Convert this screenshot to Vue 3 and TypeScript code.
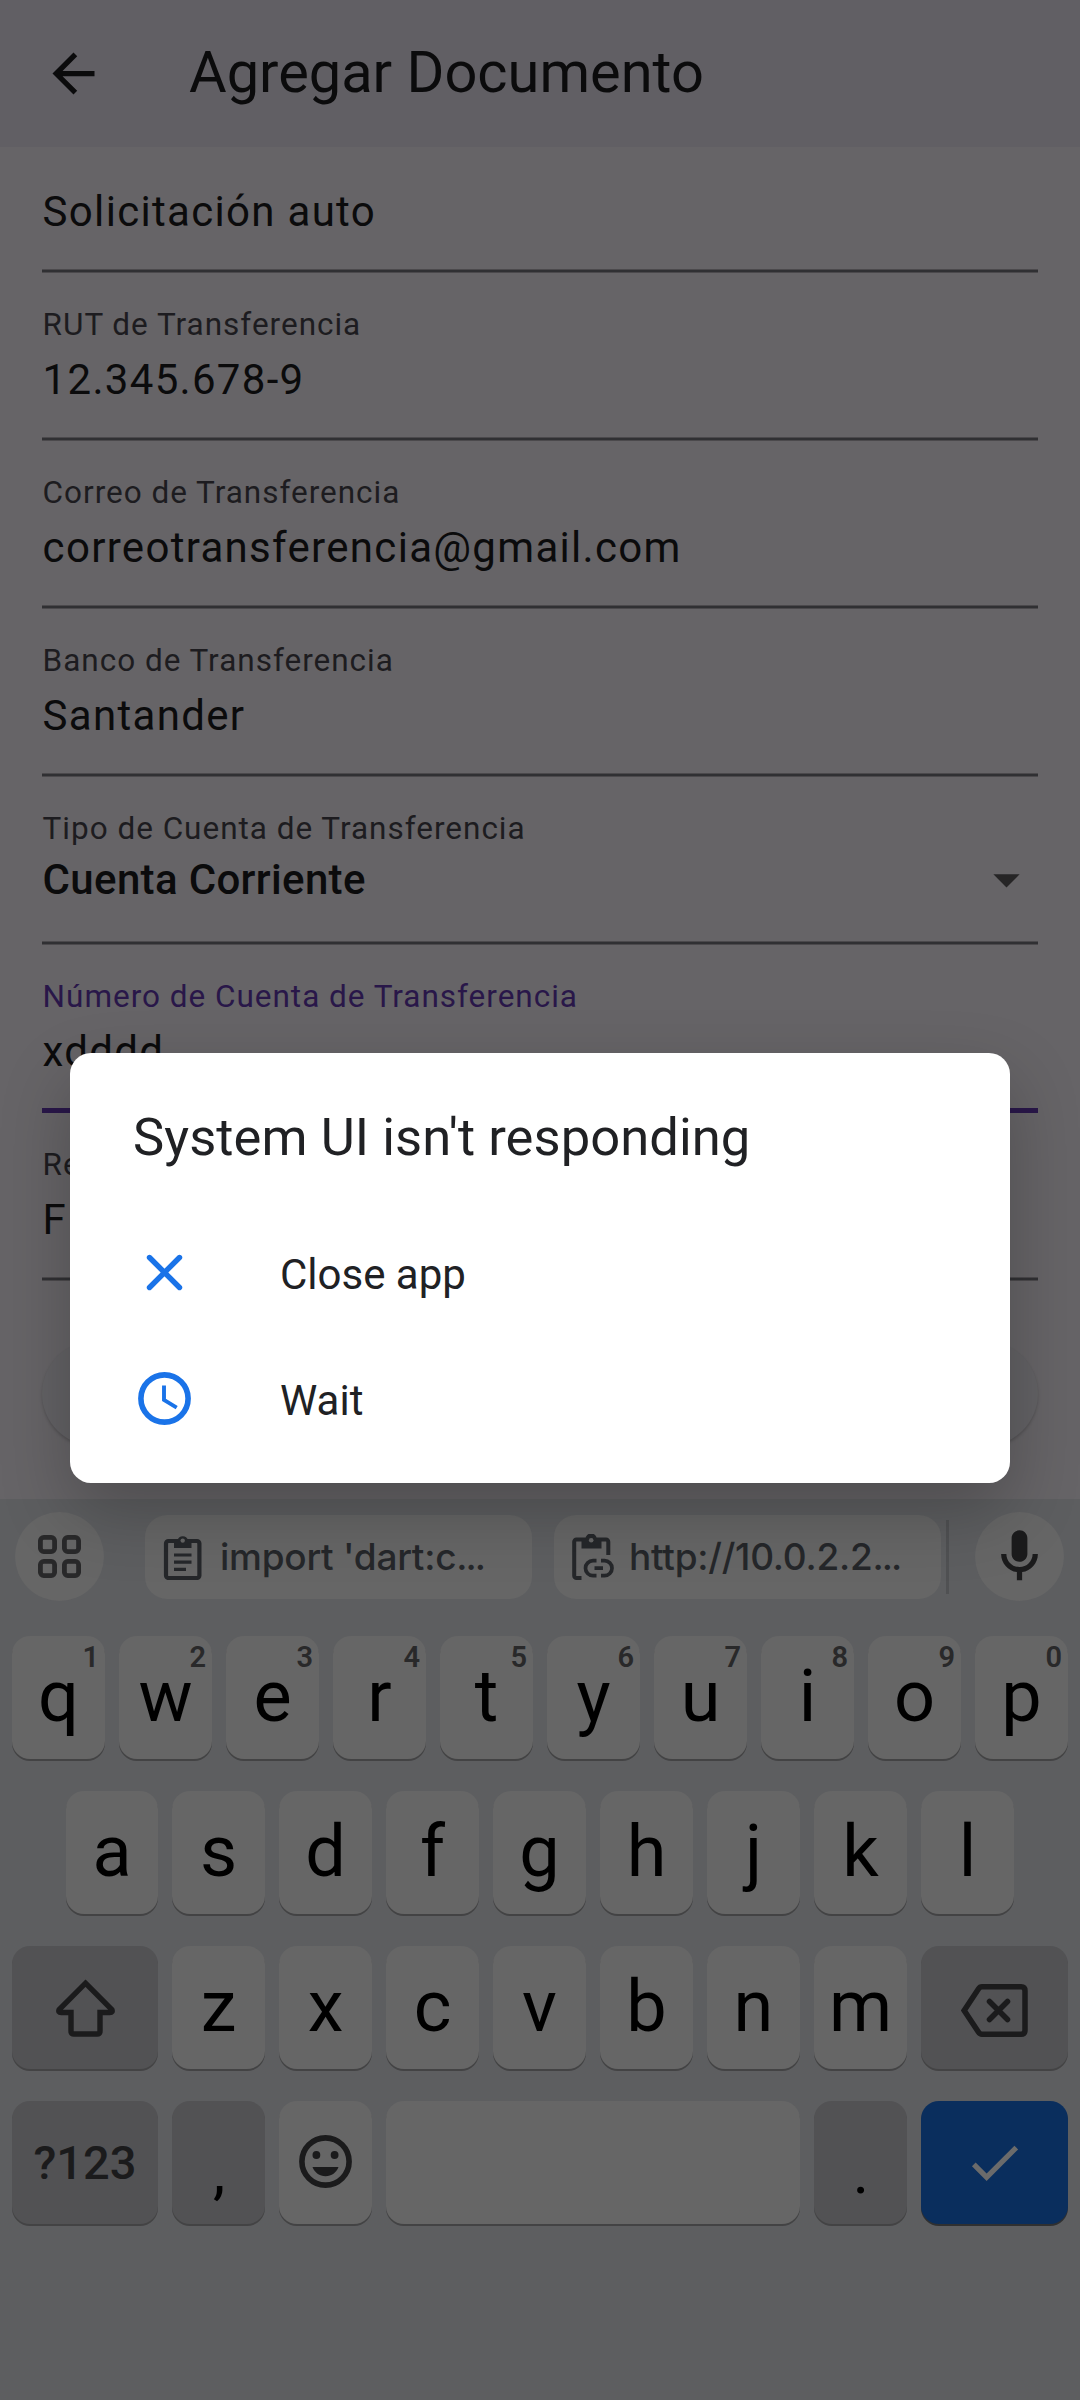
<script setup lang="ts">
interface Field {
  label?: string
  value: string
  kind?: 'select' | 'focused'
}

const fields: Field[] = [
  { value: 'Solicitación auto' },
  { label: 'RUT de Transferencia', value: '12.345.678-9' },
  { label: 'Correo de Transferencia', value: 'correotransferencia@gmail.com' },
  { label: 'Banco de Transferencia', value: 'Santander' },
  { label: 'Tipo de Cuenta de Transferencia', value: 'Cuenta Corriente', kind: 'select' },
  { label: 'Número de Cuenta de Transferencia', value: 'xdddd', kind: 'focused' },
  { label: 'Re', value: 'F' },
]

const topRow = 'qwertyuiop'.split('').map((letter, i) => ({ letter, hint: String((i + 1) % 10) }))
const middleRow = 'asdfghjkl'.split('')
const bottomRow = 'zxcvbnm'.split('')
</script>

<template>
  <div class="screen">
    <header class="app-bar">
      <svg class="icon" viewBox="0 0 24 24"><path d="M20 11H7.83l5.59-5.59L12 4l-8 8 8 8 1.41-1.41L7.83 13H20z" /></svg>
      <h1>Agregar Documento</h1>
    </header>

    <main class="form">
      <div
        v-for="field in fields"
        :key="field.value"
        class="field"
        :class="[field.kind, { first: !field.label }]"
      >
        <div v-if="field.label" class="label">{{ field.label }}</div>
        <div class="value">
          <span>{{ field.value }}</span>
          <svg v-if="field.kind === 'select'" class="icon drop" viewBox="0 0 24 24"><path d="M7 10l5 5 5-5z" /></svg>
        </div>
        <div class="underline"></div>
      </div>
      <div class="submit"></div>
    </main>

    <section class="keyboard">
      <div class="strip">
        <div class="round">
          <svg class="grid-icon" viewBox="0 0 43 43">
            <rect x="2.4" y="2.4" width="14.2" height="14.2" rx="3.4" />
            <rect x="26.4" y="2.4" width="14.2" height="14.2" rx="3.4" />
            <rect x="2.4" y="26.4" width="14.2" height="14.2" rx="3.4" />
            <rect x="26.4" y="26.4" width="14.2" height="14.2" rx="3.4" />
          </svg>
        </div>
        <div class="chip">
          <svg class="clip" viewBox="0 0 44 46">
            <rect x="3" y="7" width="33.4" height="37" rx="2.5" fill="none" stroke-width="4.2" />
            <path class="solid" d="M11 6h3.500a5.500 5.500 0 0 1 10.500 0H28.500v8H11z" />
            <circle class="hole" cx="19.700" cy="6.600" r="2.200" />
            <path d="M11 21h17.500M11 28.200h17.500M11 35.400h12" fill="none" stroke-width="3.200" />
          </svg>
          <span class="clip-text">import 'dart:c<span class="dots">...</span></span>
        </div>
        <div class="chip second">
          <svg class="clip" viewBox="0 0 44 46">
            <path d="M9.500 44H4.500a2.300 2.300 0 0 1-2.300-2.300V7.800a2.300 2.300 0 0 1 2.300-2.300H34a2.300 2.300 0 0 1 2.300 2.300V21" fill="none" stroke-width="4" />
            <path class="solid" d="M9.500 5h4a5.600 5.600 0 0 1 11.200 0h4.800v9.500h-20z" />
            <circle class="hole" cx="19.200" cy="6.300" r="2.300" />
            <path d="M24.500 26.700h-3.500a7.500 7.500 0 0 0 0 15h3.500M29 26.700h3.500a7.500 7.500 0 0 1 0 15H29M22.500 34.200h8.500" fill="none" stroke-width="3.700" />
          </svg>
          <span class="clip-text">http://10.0.2.2<span class="dots">...</span></span>
        </div>
        <div class="separator"></div>
        <div class="round mic">
          <svg class="icon" viewBox="0 0 24 24"><path d="M12 14c1.660 0 3-1.340 3-3V5c0-1.660-1.340-3-3-3S9 3.340 9 5v6c0 1.660 1.340 3 3 3zM17 11c0 2.760-2.240 5-5 5s-5-2.240-5-5H5c0 3.530 2.610 6.430 6 6.920V21h2v-3.080c3.390-.490 6-3.390 6-6.920z" /></svg>
        </div>
      </div>

      <div class="keys">
        <div class="row">
          <div v-for="key in topRow" :key="key.letter" class="key">
            {{ key.letter }}<span class="hint">{{ key.hint }}</span>
          </div>
        </div>
        <div class="row middle">
          <div v-for="letter in middleRow" :key="letter" class="key">{{ letter }}</div>
        </div>
        <div class="row">
          <div class="key dark wide">
            <svg class="shift" viewBox="0 0 59 58"><path d="M29.500 4.200 55.800 30.500q1.400 3-2 3H44V52q0 3-3 3H18q-3 0-3-3V33.500H5.200q-3.400 0-2-3z" /></svg>
          </div>
          <div v-for="letter in bottomRow" :key="letter" class="key">{{ letter }}</div>
          <div class="key dark wide end">
            <svg class="erase" viewBox="0 0 67 53">
              <path d="M21 2.800H60q4 0 4 4V46.200q0 4-4 4H21q-2.200 0-3.600-2.200L3.200 26.500 17.400 5Q18.800 2.800 21 2.800z" />
              <path d="M28.500 17.500l18 18M46.500 17.500l-18 18" />
            </svg>
          </div>
        </div>
        <div class="row">
          <div class="key dark wide symbols">?123</div>
          <div class="key dark punct">,</div>
          <div class="key">
            <svg class="smile" viewBox="0 0 53 53">
              <circle cx="26.500" cy="26.500" r="23.600" fill="none" stroke-width="5.600" />
              <circle class="solid" cx="17.400" cy="20" r="3.900" />
              <circle class="solid" cx="35.600" cy="20" r="3.900" />
              <path class="solid" d="M13.500 32h26c-2 5.500-7 9.200-13 9.200s-11-3.700-13-9.200z" />
            </svg>
          </div>
          <div class="key space"></div>
          <div class="key dark punct">.</div>
          <div class="key wide end accept">
            <svg class="icon" viewBox="0 0 24 24"><path d="M9 16.170 4.830 12l-1.420 1.410L9 19 21 7l-1.410-1.410z" /></svg>
          </div>
        </div>
      </div>
    </section>

    <div class="dialog">
      <h2>System UI isn't responding</h2>
      <div class="option">
        <svg class="icon" viewBox="0 0 63 63"><path d="M16.500 16.500l30 30M46.500 16.500l-30 30" stroke-width="5.400" stroke-linecap="round" /></svg>
        <span>Close app</span>
      </div>
      <div class="option">
        <svg class="icon" viewBox="0 0 63 63">
          <circle cx="31.500" cy="31.500" r="23.600" stroke-width="5.600" />
          <path d="M31 18.500V33l12.700 7.600" stroke-width="3.900" />
        </svg>
        <span>Wait</span>
      </div>
    </div>
  </div>
</template>

<style scoped>
.screen {
  position: relative;
  display: flex;
  flex-direction: column;
  width: 1080px;
  height: 2400px;
  overflow: hidden;
  background: #666467;
  color: #0b0b0c;
  font-family: Roboto, "Liberation Sans", sans-serif;
}
.screen * {
  box-sizing: border-box;
}
svg {
  display: block;
  flex: none;
}
.icon {
  width: 63px;
  height: 63px;
}
.app-bar {
  display: flex;
  flex: none;
  align-items: center;
  gap: 84px;
  height: 147px;
  padding-left: 42px;
  background: #615f64;
}
.app-bar .icon {
  fill: #0b0b0c;
}
h1 {
  margin: 0;
  padding-bottom: 4px;
  font-size: 57.750px;
  font-weight: 400;
  line-height: 68px;
}
.form {
  flex: none;
  height: 1352px;
  padding: 0 42px;
}
.field {
  display: flex;
  flex-direction: column;
  height: 168px;
  padding-top: 32.600px;
}
.field.first {
  height: 125.600px;
  padding-top: 39.700px;
}
.label {
  height: 40px;
  margin-bottom: 9.500px;
  padding-left: 0.600px;
  color: #1d1c20;
  font-size: 31.500px;
  line-height: 40px;
  letter-spacing: 0.980px;
  white-space: nowrap;
}
.value {
  display: flex;
  justify-content: space-between;
  height: 50px;
  font-size: 42px;
  line-height: 50px;
  letter-spacing: 1.310px;
}
.value span {
  padding-left: 0.600px;
}
.select .label {
  margin-bottom: 5.500px;
}
.select .value {
  align-items: center;
  font-weight: 500;
  letter-spacing: 0.340px;
}
.drop {
  fill: #262526;
}
.underline {
  height: 4px;
  margin-top: auto;
  background: linear-gradient(#4b494c 1px, #303033 1px 3px, #4b494c 3px);
}
.focused .label {
  color: #291749;
}
.focused .underline {
  height: 5px;
  background: #291749;
}
.submit {
  height: 105px;
  margin-top: 60.900px;
  border-radius: 53px;
  background: #636265;
  box-shadow: 0 2px 3px rgba(0, 0, 0, 0.180);
}
.keyboard {
  flex: 1;
  padding-top: 13px;
  background: #5d5e60;
}
.strip {
  display: flex;
  align-items: center;
  height: 89px;
  padding-left: 15px;
}
.round {
  display: flex;
  align-items: center;
  justify-content: center;
  width: 89px;
  height: 89px;
  border-radius: 50%;
  background: #666;
}
.grid-icon {
  width: 43px;
  height: 43px;
  fill: none;
  stroke: #29292a;
  stroke-width: 4.800px;
}
.chip {
  display: flex;
  align-items: center;
  width: 387px;
  height: 84px;
  margin-left: 41px;
  padding-left: 18px;
  border-radius: 22px;
  background: #666;
  color: #25272a;
  font-family: Inter, Roboto, sans-serif;
  font-size: 37px;
  font-weight: 500;
  letter-spacing: -0.250px;
  white-space: nowrap;
}
.chip.second {
  margin-left: 22px;
}
.clip-text {
  margin-left: 13px;
}
.dots {
  letter-spacing: -2px;
}
.clip {
  width: 44px;
  height: 46px;
  stroke: #25272a;
}
.clip .solid {
  fill: #25272a;
  stroke: none;
}
.clip .hole {
  fill: #666;
  stroke: none;
}
.separator {
  width: 3px;
  height: 74px;
  margin: 0 26px 0 5px;
  background: #505153;
}
.mic .icon {
  fill: #1b1b1c;
}
.keys {
  display: flex;
  flex-direction: column;
  gap: 32px;
  padding: 35px 12px 0;
}
.row {
  display: flex;
  gap: 14px;
}
.row.middle {
  padding: 0 54px;
}
.key {
  position: relative;
  display: flex;
  flex: none;
  align-items: center;
  justify-content: center;
  width: 93px;
  height: 123px;
  padding-bottom: 2px;
  border-radius: 18px;
  background: #666;
  box-shadow: 0 2px 0 #434344;
  color: #000;
  font-size: 72px;
  line-height: 120px;
}
.row.middle .key:first-child {
  width: 92px;
}
.hint {
  position: absolute;
  top: 8px;
  right: 6px;
  color: #29292a;
  font-size: 29px;
  font-weight: 600;
  line-height: 26px;
}
.key.dark {
  background: #525254;
}
.key.wide {
  width: 146px;
  padding-bottom: 0;
}
.key.wide.end {
  width: 147px;
}
.key.space {
  flex: 1;
}
.symbols {
  color: #1b1b1c;
  font-size: 47px;
  font-weight: 500;
}
.key.punct {
  padding: 19px 0 0 1px;
  font-size: 62px;
}
.shift {
  width: 59px;
  height: 58px;
  fill: none;
  stroke: #1b1b1c;
  stroke-width: 5.400px;
}
.erase {
  width: 67px;
  height: 53px;
  margin-top: 5px;
  fill: none;
  stroke: #1b1b1c;
  stroke-width: 5.500px;
  stroke-linecap: round;
}
.smile {
  width: 53px;
  height: 53px;
  stroke: #1b1b1c;
}
.smile .solid {
  fill: #1b1b1c;
  stroke: none;
}
.key.accept {
  background: #0a2e5d;
  box-shadow: 0 2px 0 #2f3031;
}
.accept .icon {
  fill: #6b6b6b;
}
.dialog {
  position: absolute;
  top: 1053px;
  left: 70px;
  display: flex;
  flex-direction: column;
  width: 940px;
  height: 430px;
  padding: 53px 63px 0;
  border-radius: 21px;
  background: #fff;
  box-shadow: 0 28px 70px rgba(0, 0, 0, 0.240);
  color: #202124;
}
h2 {
  height: 62px;
  margin: 0 0 41px;
  font-size: 52.500px;
  font-weight: 400;
  line-height: 62px;
  letter-spacing: 0.070px;
}
.option {
  display: flex;
  align-items: center;
  gap: 84px;
  height: 126px;
  font-size: 42px;
}
.option .icon {
  fill: none;
  stroke: #1a73e8;
}
.option span {
  padding-top: 4px;
}
</style>

<style>
body {
  margin: 0;
}
</style>
